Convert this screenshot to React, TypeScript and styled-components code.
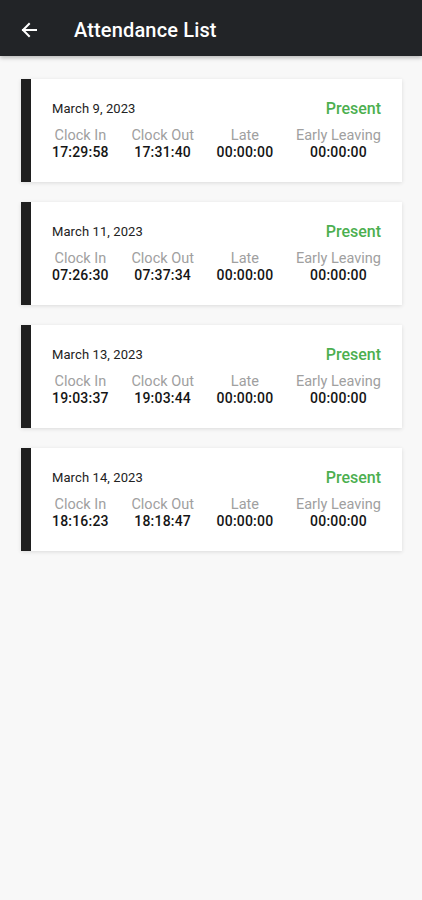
import { createGlobalStyle, styled } from "styled-components";

const GlobalStyle = createGlobalStyle`
  html, body {
    margin: 0;
    padding: 0;
    background: #f8f8f8;
    font-family: Roboto, "Liberation Sans", sans-serif;
  }
`;

const Page = styled.div`
  min-height: 900px;
  background: #f8f8f8;
`;

const Header = styled.header`
  height: 56px;
  box-sizing: border-box;
  padding: 3px 0 0 21px;
  background: #222427;
  display: flex;
  align-items: center;
  gap: 37px;
  box-shadow: 0 2px 4px rgba(0, 0, 0, 0.25);
`;

const BackButton = styled.button`
  border: none;
  background: none;
  padding: 0;
  width: 16px;
  height: 16px;
  display: flex;
  align-items: center;
  justify-content: center;
  color: #fff;
`;

const Title = styled.h1`
  margin: 0;
  color: #fff;
  font-size: 20px;
  font-weight: 500;
  letter-spacing: 0.15px;
`;

const List = styled.div`
  display: flex;
  flex-direction: column;
  gap: 20px;
  padding: 23px 20px 0 21px;
`;

const Card = styled.div`
  background: #fff;
  border-left: 10px solid #1f1f1f;
  box-shadow: 0 1px 4px rgba(0, 0, 0, 0.12);
  height: 103px;
  box-sizing: border-box;
  padding: 20px 21px 0 21px;
`;

const TopRow = styled.div`
  display: flex;
  justify-content: space-between;
  align-items: center;
  height: 18px;
`;

const DateText = styled.span`
  font-size: 13px;
  color: #222;
  letter-spacing: 0.1px;
`;

const Status = styled.span<{ $color: string }>`
  font-size: 16px;
  font-weight: 500;
  color: ${(p) => p.$color};
  margin-top: 1px;
`;

const Stats = styled.div`
  display: flex;
  justify-content: space-between;
  margin-top: 11px;
`;

const Stat = styled.div`
  display: flex;
  flex-direction: column;
  align-items: center;
`;

const Label = styled.span`
  font-size: 14.5px;
  line-height: 16px;
  color: #a0a0a0;
`;

const Value = styled.span`
  font-size: 14px;
  line-height: 17px;
  font-weight: 500;
  color: #151515;
  letter-spacing: 0.2px;
`;

const records = [
  { date: "March 9, 2023", clockIn: "17:29:58", clockOut: "17:31:40" },
  { date: "March 11, 2023", clockIn: "07:26:30", clockOut: "07:37:34" },
  { date: "March 13, 2023", clockIn: "19:03:37", clockOut: "19:03:44" },
  { date: "March 14, 2023", clockIn: "18:16:23", clockOut: "18:18:47" },
];

export default function App() {
  return (
    <Page>
      <GlobalStyle />
      <Header>
        <BackButton aria-label="Back">
          <svg width="16" height="16" viewBox="0 0 16 16" fill="none">
            <path
              d="M15 8H2M8 2L2 8l6 6"
              stroke="#fff"
              strokeWidth="2"
              strokeLinecap="square"
            />
          </svg>
        </BackButton>
        <Title>Attendance List</Title>
      </Header>
      <List>
        {records.map((r) => (
          <Card key={r.date}>
            <TopRow>
              <DateText>{r.date}</DateText>
              <Status $color="#4caf50">Present</Status>
            </TopRow>
            <Stats>
              <Stat>
                <Label>Clock In</Label>
                <Value>{r.clockIn}</Value>
              </Stat>
              <Stat>
                <Label>Clock Out</Label>
                <Value>{r.clockOut}</Value>
              </Stat>
              <Stat>
                <Label>Late</Label>
                <Value>00:00:00</Value>
              </Stat>
              <Stat>
                <Label>Early Leaving</Label>
                <Value>00:00:00</Value>
              </Stat>
            </Stats>
          </Card>
        ))}
      </List>
    </Page>
  );
}
